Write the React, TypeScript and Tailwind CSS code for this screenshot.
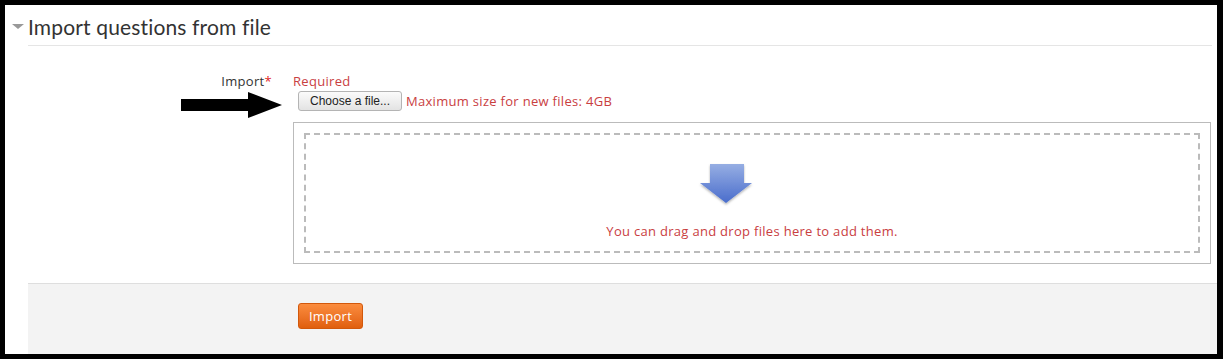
import React from 'react';

const font = { fontFamily: '"Open Sans", Lato, sans-serif' };

const BlueArrow = () => (
  <svg width="56" height="44" viewBox="0 0 56 44">
    <defs>
      <linearGradient id="blueArrowFill" x1="0" y1="0" x2="0" y2="1">
        <stop offset="0" stopColor="#96aee3" />
        <stop offset="1" stopColor="#4a6dcc" />
      </linearGradient>
      <filter id="blueArrowShadow" x="-20%" y="-20%" width="140%" height="150%">
        <feDropShadow dx="0" dy="1.5" stdDeviation="1.2" floodColor="#000" floodOpacity="0.3" />
      </filter>
    </defs>
    <path
      d="M12 1 H46 V20 H54 L28 40 L2 20 H12 Z"
      fill="url(#blueArrowFill)"
      filter="url(#blueArrowShadow)"
    />
  </svg>
);

const PointerArrow = () => (
  <svg width="102" height="27" viewBox="0 0 102 27" className="absolute left-[176px] top-[87px]">
    <path d="M0 7 H67 V0 L101 13 L67 26 V19 H0 Z" fill="#000" />
  </svg>
);

export default function App() {
  return (
    <div className="w-[1223px] h-[359px] bg-black pt-[5px] pl-[5px] pr-[6px] pb-[5px]">
      <div className="relative h-full bg-white flex flex-col tracking-[0.3px]" style={font}>
        {/* Heading */}
        <div className="flex items-center pl-[7px] pt-[9px] h-[34px]">
          <span className="w-0 h-0 border-l-[6px] border-r-[6px] border-t-[5px] border-l-transparent border-r-transparent border-t-[#999] mr-[4px]" />
          <h2 className="text-[21px] leading-[28px] text-[#333] tracking-[0.15px]" style={{ fontFamily: 'Lato, sans-serif' }}>
            Import questions from file
          </h2>
        </div>
        <div className="ml-[23px] mr-[5px] mt-[6px] border-t border-[#e5e5e5]" />

        {/* Import field */}
        <div className="flex mt-[22px]">
          <div className="w-[267px] text-right text-[13px] leading-[16px] text-[#333] pt-[5px]">
            Import<span className="text-[#e02222]">*</span>
          </div>
          <div className="flex-1 ml-[21px] mr-[6px] flex flex-col">
            <div className="text-[13px] leading-[16px] text-[#c9403f] pt-[5px]">Required</div>
            <div className="flex items-center mt-[1px]">
              <button
                className="h-[20px] w-[104px] ml-[5px] rounded-[3px] border border-[#b4b4b4] bg-gradient-to-b from-[#fbfbfb] to-[#e3e3e3] text-[12px] text-[#222] leading-[18px] tracking-normal"
                style={{ fontFamily: '"Liberation Sans", Arial, sans-serif' }}
              >
                Choose a file...
              </button>
              <span className="ml-[4px] text-[13px] text-[#c9403f] pt-[2px]">Maximum size for new files: 4GB</span>
            </div>
            <div className="mt-[10px] h-[142px] border border-[#bbb] p-[10px]">
              <div className="h-full border-2 border-dashed border-[#bbb] flex flex-col items-center pt-[28px]">
                <div className="mr-[52px]">
                  <BlueArrow />
                </div>
                <div className="mt-[15px] text-[13px] text-[#c9403f]">You can drag and drop files here to add them.</div>
              </div>
            </div>
          </div>
        </div>

        <PointerArrow />

        {/* Footer */}
        <div className="mt-auto ml-[23px] h-[71px] bg-[#f3f3f3] border-t border-[#dedede] pl-[270px] pt-[19px]">
          <button className="h-[26px] w-[65px] rounded-[3px] border border-[#d2580b] bg-gradient-to-b from-[#fb8c3d] to-[#e05f0b] text-white text-[13px] leading-[24px]">
            Import
          </button>
        </div>
      </div>
    </div>
  );
}
